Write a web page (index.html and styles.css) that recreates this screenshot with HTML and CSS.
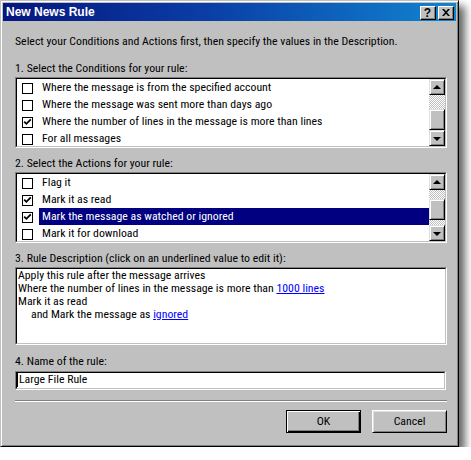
FILE: index.html
```html
<!DOCTYPE html>
<html>
<head>
<meta charset="utf-8">
<title>New News Rule</title>
<link rel="stylesheet" href="styles.css">
</head>
<body>
<div class="window">
  <div class="titlebar">
    <span class="title">New News Rule</span>
    <div class="tbtns">
      <div class="tbtn help">?</div>
      <div class="tbtn close">
        <svg width="8" height="7" viewBox="0 0 8 7"><path d="M0 0h2l2 2.2L6 0h2L5 3.5 8 7H6L4 4.8 2 7H0l3-3.5z" fill="#000"/></svg>
      </div>
    </div>
  </div>
  <div class="content">
    <p class="intro">Select your Conditions and Actions first, then specify the values in the Description.</p>

    <p class="label first">1. Select the Conditions for your rule:</p>
    <div class="sunken listbox">
      <div class="sunken-in list-in">
        <ul class="items">
          <li><span class="cb"></span><span class="txt">Where the message is from the specified account</span></li>
          <li><span class="cb"></span><span class="txt">Where the message was sent more than days ago</span></li>
          <li><span class="cb checked"><svg width="9" height="9" viewBox="0 0 9 9"><path d="M1.2 3.6 3.4 5.8 7.8 1.4" fill="none" stroke="#000" stroke-width="1.8"/></svg></span><span class="txt">Where the number of lines in the message is more than lines</span></li>
          <li><span class="cb"></span><span class="txt">For all messages</span></li>
        </ul>
        <div class="scrollbar">
          <div class="sbtn"><span class="arrow-up"></span></div>
          <div class="track track-end"><div class="thumb thumb-cond"></div></div>
          <div class="sbtn"><span class="arrow-down"></span></div>
        </div>
      </div>
    </div>

    <p class="label">2. Select the Actions for your rule:</p>
    <div class="sunken listbox">
      <div class="sunken-in list-in">
        <ul class="items">
          <li><span class="cb"></span><span class="txt">Flag it</span></li>
          <li><span class="cb checked"><svg width="9" height="9" viewBox="0 0 9 9"><path d="M1.2 3.6 3.4 5.8 7.8 1.4" fill="none" stroke="#000" stroke-width="1.8"/></svg></span><span class="txt">Mark it as read</span></li>
          <li class="selected"><span class="cb checked"><svg width="9" height="9" viewBox="0 0 9 9"><path d="M1.2 3.6 3.4 5.8 7.8 1.4" fill="none" stroke="#000" stroke-width="1.8"/></svg></span><span class="txt">Mark the message as watched or ignored</span></li>
          <li><span class="cb"></span><span class="txt">Mark it for download</span></li>
        </ul>
        <div class="scrollbar">
          <div class="sbtn"><span class="arrow-up"></span></div>
          <div class="track track-act"><div class="thumb thumb-act"></div></div>
          <div class="sbtn"><span class="arrow-down"></span></div>
        </div>
      </div>
    </div>

    <p class="label label3">3. Rule Description (click on an underlined value to edit it):</p>
    <div class="sunken desc">
      <div class="sunken-in desc-in">
        <div>Apply this rule after the message arrives</div>
        <div>Where the number of lines in the message is more than <a href="#">1000 lines</a></div>
        <div>Mark it as read</div>
        <div class="indent">and Mark the message as <a href="#">ignored</a></div>
      </div>
    </div>

    <p class="label label4">4. Name of the rule:</p>
    <div class="sunken input">
      <div class="sunken-in input-in"><span class="caret"></span>Large File Rule</div>
    </div>

    <div class="separator"></div>

    <div class="buttons">
      <div class="btn default"><span>OK</span></div>
      <div class="btn"><span>Cancel</span></div>
    </div>
  </div>
</div>
</body>
</html>
```
FILE: styles.css
```css
html, body {
  margin: 0;
  padding: 0;
  background: #fff;
}

.window {
  width: 459px;
  height: 447px;
  box-sizing: border-box;
  background: #c0c0c0;
  border: 1px solid;
  border-color: #c0c0c0 #000 #000 #c0c0c0;
  box-shadow: inset 1px 1px 0 #fff, inset -1px -1px 0 #808080, 6px 6px 8px rgba(0, 0, 0, 0.6);
  padding: 2px;
  font: 11.8px "Roboto Condensed", "Liberation Sans", sans-serif;
  color: #000;
}

.titlebar {
  height: 18px;
  display: flex;
  align-items: center;
  justify-content: space-between;
  background: linear-gradient(90deg, #06157f 0%, #0a3ea6 45%, #1084d0 100%);
}

.title {
  font: bold 12px "Liberation Sans", "DejaVu Sans", sans-serif;
  color: #fff;
  line-height: 18px;
  padding-left: 3px;
}

.tbtns {
  display: flex;
  gap: 2px;
  padding-right: 2px;
  padding-top: 1px;
}

.tbtn {
  width: 16px;
  height: 14px;
  box-sizing: border-box;
  background: #c0c0c0;
  border: 1px solid;
  border-color: #fff #000 #000 #fff;
  box-shadow: inset -1px -1px 0 #808080;
  display: flex;
  align-items: center;
  justify-content: center;
}

.help {
  font: bold 12px "Liberation Sans", sans-serif;
  line-height: 12px;
  padding-right: 1px;
}

.close svg {
  display: block;
  margin-left: -1px;
  margin-top: -1px;
}

.content {
  padding: 0 9px 0 12px;
}

p {
  margin: 0;
  line-height: 13px;
  white-space: nowrap;
}

.intro {
  margin-top: 14px;
}

.label {
  margin-top: 9px;
}

.label.first {
  margin-top: 14px;
}

.label3 {
  margin-top: 9px;
}

.label4 {
  margin-top: 10px;
}

.sunken {
  box-sizing: border-box;
  border: 1px solid;
  border-color: #808080 #fff #fff #808080;
  margin-top: 2px;
}

.sunken-in {
  box-sizing: border-box;
  height: 100%;
  border: 1px solid;
  border-color: #000 #c0c0c0 #c0c0c0 #000;
  background: #fff;
}

.listbox {
  height: 71px;
}

.list-in {
  display: flex;
  overflow: hidden;
}

.items {
  flex: 1;
  list-style: none;
  margin: 0;
  padding: 0;
  overflow: hidden;
}

.items li {
  height: 17px;
  display: flex;
  align-items: center;
  white-space: nowrap;
}

.cb {
  width: 11px;
  height: 11px;
  box-sizing: border-box;
  border: 1px solid #000;
  background: #fff;
  margin-left: 5px;
  flex: none;
  margin-top: 2px;
}

.cb svg {
  display: block;
}

.txt {
  flex: 1;
  margin-left: 6px;
  padding-left: 3px;
  line-height: 17px;
}

.selected .txt {
  background: #000080;
  color: #fff;
}

.scrollbar {
  width: 16px;
  flex: none;
  display: flex;
  flex-direction: column;
}

.sbtn {
  width: 16px;
  height: 16px;
  box-sizing: border-box;
  background: #c0c0c0;
  border: 1px solid;
  border-color: #dfdfdf #000 #000 #dfdfdf;
  box-shadow: inset 1px 1px 0 #fff, inset -1px -1px 0 #808080;
  display: flex;
  align-items: center;
  justify-content: center;
  flex: none;
}

.arrow-up {
  width: 0;
  height: 0;
  border-left: 4px solid transparent;
  border-right: 4px solid transparent;
  border-bottom: 4px solid #000;
  margin-top: -1px;
}

.arrow-down {
  width: 0;
  height: 0;
  border-left: 4px solid transparent;
  border-right: 4px solid transparent;
  border-top: 4px solid #000;
  margin-top: 1px;
}

.track {
  flex: 1;
  display: flex;
  flex-direction: column;
  background: repeating-conic-gradient(#c0c0c0 0 25%, #fff 0 50%) 0 0 / 2px 2px;
}

.track-end {
  justify-content: flex-end;
}

.thumb {
  height: 21px;
  box-sizing: border-box;
  background: #c0c0c0;
  border: 1px solid;
  border-color: #dfdfdf #000 #000 #dfdfdf;
  box-shadow: inset 1px 1px 0 #fff, inset -1px -1px 0 #808080;
}

.thumb-act {
  margin-top: 9px;
}

.desc {
  height: 78px;
}

.desc-in {
  padding: 0 1px;
  line-height: 13px;
  white-space: nowrap;
}

.indent {
  padding-left: 13px;
}

a {
  color: #0000ff;
  text-decoration: underline;
}

.input {
  height: 19px;
  margin-top: 3px;
  margin-right: 1px;
}

.input-in {
  line-height: 13px;
  display: flex;
  align-items: flex-start;
}

.caret {
  width: 1px;
  height: 14px;
  background: #000;
  margin-right: 1px;
}

.separator {
  margin-top: 10px;
  border-top: 1px solid #808080;
  border-bottom: 1px solid #fff;
}

.buttons {
  margin-top: 8px;
  display: flex;
  justify-content: flex-end;
  gap: 11px;
}

.btn {
  width: 75px;
  height: 23px;
  box-sizing: border-box;
  border: 1px solid;
  border-color: #fff #000 #000 #fff;
  box-shadow: inset 1px 1px 0 #dfdfdf, inset -1px -1px 0 #808080;
  display: flex;
  align-items: center;
  justify-content: center;
  line-height: 13px;
}

.btn.default {
  border-color: #000;
  box-shadow: inset 1px 1px 0 #fff, inset -1px -1px 0 #000, inset -2px -2px 0 #808080;
}
```
